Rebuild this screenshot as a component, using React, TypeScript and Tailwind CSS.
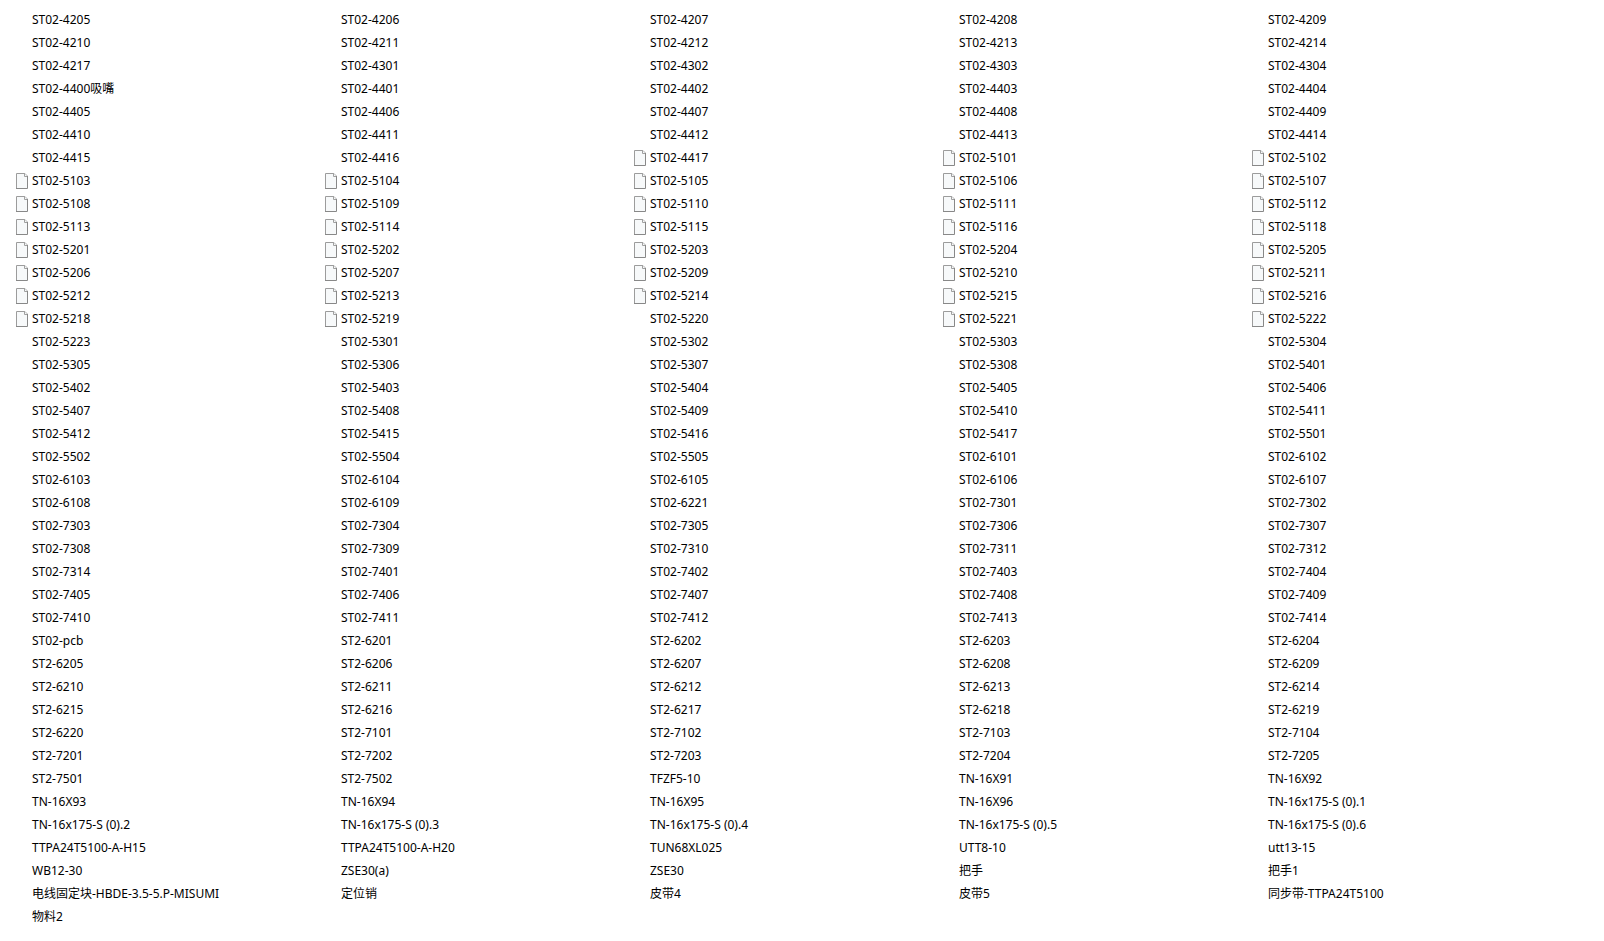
/**
 * File list view: part names flow left to right in fixed-width columns,
 * with a small document icon in front of the entries that have one.
 */
import React from 'react';

interface FileItem {
  name: string;
  icon?: boolean;
}

const plain = (names: string[]): FileItem[] => names.map((name) => ({ name }));
const withIcon = (names: string[]): FileItem[] => names.map((name) => ({ name, icon: true }));

const files: FileItem[] = [
  ...plain([
    'ST02-4205', 'ST02-4206', 'ST02-4207', 'ST02-4208', 'ST02-4209',
    'ST02-4210', 'ST02-4211', 'ST02-4212', 'ST02-4213', 'ST02-4214',
    'ST02-4217', 'ST02-4301', 'ST02-4302', 'ST02-4303', 'ST02-4304',
    'ST02-4400吸嘴', 'ST02-4401', 'ST02-4402', 'ST02-4403', 'ST02-4404',
    'ST02-4405', 'ST02-4406', 'ST02-4407', 'ST02-4408', 'ST02-4409',
    'ST02-4410', 'ST02-4411', 'ST02-4412', 'ST02-4413', 'ST02-4414',
    'ST02-4415', 'ST02-4416',
  ]),
  ...withIcon([
    'ST02-4417', 'ST02-5101', 'ST02-5102',
    'ST02-5103', 'ST02-5104', 'ST02-5105', 'ST02-5106', 'ST02-5107',
    'ST02-5108', 'ST02-5109', 'ST02-5110', 'ST02-5111', 'ST02-5112',
    'ST02-5113', 'ST02-5114', 'ST02-5115', 'ST02-5116', 'ST02-5118',
    'ST02-5201', 'ST02-5202', 'ST02-5203', 'ST02-5204', 'ST02-5205',
    'ST02-5206', 'ST02-5207', 'ST02-5209', 'ST02-5210', 'ST02-5211',
    'ST02-5212', 'ST02-5213', 'ST02-5214', 'ST02-5215', 'ST02-5216',
    'ST02-5218', 'ST02-5219',
  ]),
  ...plain(['ST02-5220']),
  ...withIcon(['ST02-5221', 'ST02-5222']),
  ...plain([
    'ST02-5223', 'ST02-5301', 'ST02-5302', 'ST02-5303', 'ST02-5304',
    'ST02-5305', 'ST02-5306', 'ST02-5307', 'ST02-5308', 'ST02-5401',
    'ST02-5402', 'ST02-5403', 'ST02-5404', 'ST02-5405', 'ST02-5406',
    'ST02-5407', 'ST02-5408', 'ST02-5409', 'ST02-5410', 'ST02-5411',
    'ST02-5412', 'ST02-5415', 'ST02-5416', 'ST02-5417', 'ST02-5501',
    'ST02-5502', 'ST02-5504', 'ST02-5505', 'ST02-6101', 'ST02-6102',
    'ST02-6103', 'ST02-6104', 'ST02-6105', 'ST02-6106', 'ST02-6107',
    'ST02-6108', 'ST02-6109', 'ST02-6221', 'ST02-7301', 'ST02-7302',
    'ST02-7303', 'ST02-7304', 'ST02-7305', 'ST02-7306', 'ST02-7307',
    'ST02-7308', 'ST02-7309', 'ST02-7310', 'ST02-7311', 'ST02-7312',
    'ST02-7314', 'ST02-7401', 'ST02-7402', 'ST02-7403', 'ST02-7404',
    'ST02-7405', 'ST02-7406', 'ST02-7407', 'ST02-7408', 'ST02-7409',
    'ST02-7410', 'ST02-7411', 'ST02-7412', 'ST02-7413', 'ST02-7414',
    'ST02-pcb', 'ST2-6201', 'ST2-6202', 'ST2-6203', 'ST2-6204',
    'ST2-6205', 'ST2-6206', 'ST2-6207', 'ST2-6208', 'ST2-6209',
    'ST2-6210', 'ST2-6211', 'ST2-6212', 'ST2-6213', 'ST2-6214',
    'ST2-6215', 'ST2-6216', 'ST2-6217', 'ST2-6218', 'ST2-6219',
    'ST2-6220', 'ST2-7101', 'ST2-7102', 'ST2-7103', 'ST2-7104',
    'ST2-7201', 'ST2-7202', 'ST2-7203', 'ST2-7204', 'ST2-7205',
    'ST2-7501', 'ST2-7502', 'TFZF5-10', 'TN-16X91', 'TN-16X92',
    'TN-16X93', 'TN-16X94', 'TN-16X95', 'TN-16X96', 'TN-16x175-S (0).1',
    'TN-16x175-S (0).2', 'TN-16x175-S (0).3', 'TN-16x175-S (0).4', 'TN-16x175-S (0).5', 'TN-16x175-S (0).6',
    'TTPA24T5100-A-H15', 'TTPA24T5100-A-H20', 'TUN68XL025', 'UTT8-10', 'utt13-15',
    'WB12-30', 'ZSE30(a)', 'ZSE30', '把手', '把手1',
    '电线固定块-HBDE-3.5-5.P-MISUMI', '定位销', '皮带4', '皮带5', '同步带-TTPA24T5100',
    '物料2',
  ]),
];

const DocumentIcon: React.FC = () => (
  <svg className="h-4 w-3" viewBox="0 0 12 16" fill="none" aria-hidden="true">
    <path d="M.5 .5H9L11.5 3V15.5H.5Z" fill="#f7f9fa" />
    <path d="M9 .5H.5V15" stroke="#9c9c9c" />
    <path d="M0 15.5H11.5V3" stroke="#888888" />
    <path d="M8.5 1V3.5H11" stroke="#a0a0a0" />
    <path d="M9 .5L11.5 3" stroke="#b4b4b4" />
  </svg>
);

const FileRow: React.FC<{ item: FileItem }> = ({ item }) => (
  <li className="flex h-[23px] items-center gap-1">
    <span className="mt-1 h-4 w-3 shrink-0 self-start">{item.icon && <DocumentIcon />}</span>
    <span className="whitespace-nowrap">{item.name}</span>
  </li>
);

const App: React.FC = () => {
  return (
    <main className="min-h-screen bg-white pt-2 pb-3 pl-4 font-['Noto_Sans','Noto_Sans_CJK_SC',sans-serif] text-xs text-black">
      <ul className="grid grid-cols-[repeat(auto-fill,309px)]">
        {files.map((item) => (
          <FileRow key={item.name} item={item} />
        ))}
      </ul>
    </main>
  );
};

export default App;
